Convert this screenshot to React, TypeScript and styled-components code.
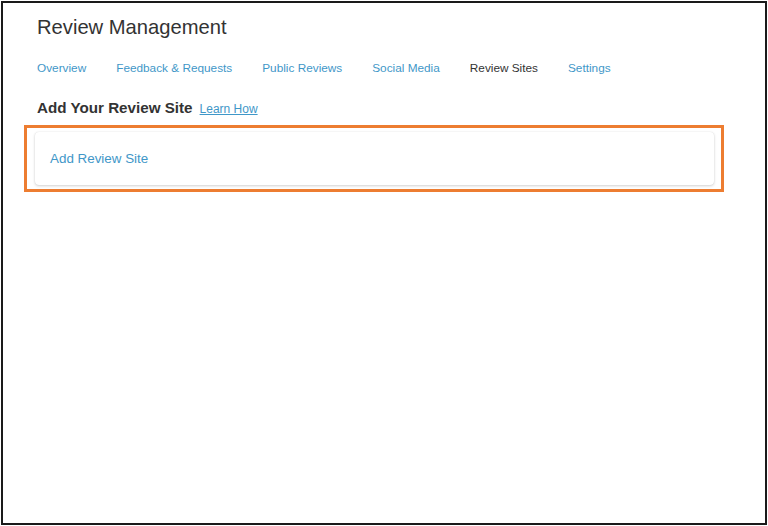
import styled, { createGlobalStyle } from 'styled-components';

const GlobalStyle = createGlobalStyle`
  html, body {
    margin: 0;
    padding: 0;
    background: #ffffff;
  }
  body {
    font-family: 'Liberation Sans', Arial, sans-serif;
    color: #333333;
  }
`;

const Frame = styled.div`
  box-sizing: border-box;
  margin: 1px;
  width: 766px;
  height: 524px;
  border: 2px solid #1a1a1a;
  padding: 0 41px 0 21px;
`;

const Header = styled.div`
  padding-left: 13px;
`;

const Title = styled.h1`
  margin: 0;
  padding-top: 12px;
  font-size: 20.2px;
  line-height: 24px;
  font-weight: 400;
  color: #333333;
`;

const Tabs = styled.nav`
  display: flex;
  gap: 30px;
  margin-top: 21px;
`;

const Tab = styled.a<{ $active?: boolean }>`
  font-size: 11.8px;
  line-height: 16px;
  color: ${(p) => (p.$active ? '#333333' : '#3f97c8')};
  text-decoration: none;
  cursor: pointer;
`;

const SectionTitle = styled.div`
  display: flex;
  align-items: baseline;
  gap: 7px;
  margin-top: 23px;
`;

const Heading = styled.h2`
  margin: 0;
  font-size: 15.2px;
  line-height: 18px;
  font-weight: 700;
  color: #333333;
`;

const LearnLink = styled.a`
  font-size: 12px;
  color: #3f97c8;
  text-decoration: underline;
  cursor: pointer;
`;

const Highlight = styled.div`
  margin-top: 8px;
  border: 3px solid #ed7d31;
  padding: 4px 7px 4px 8px;
`;

const Card = styled.div`
  height: 53px;
  display: flex;
  align-items: center;
  padding: 0 15px;
  background: #ffffff;
  border-radius: 4px;
  box-shadow: 0 1px 3px rgba(0, 0, 0, 0.18), 0 0 1px rgba(0, 0, 0, 0.12);
`;

const CardLink = styled.a`
  font-size: 13.4px;
  color: #3f97c8;
  text-decoration: none;
  cursor: pointer;
`;

const tabs = ['Overview', 'Feedback & Requests', 'Public Reviews', 'Social Media', 'Review Sites', 'Settings'];

export default function App() {
  return (
    <>
      <GlobalStyle />
      <Frame>
        <Header>
          <Title>Review Management</Title>
          <Tabs>
            {tabs.map((t) => (
              <Tab key={t} $active={t === 'Review Sites'}>
                {t}
              </Tab>
            ))}
          </Tabs>
          <SectionTitle>
            <Heading>Add Your Review Site</Heading>
            <LearnLink>Learn How</LearnLink>
          </SectionTitle>
        </Header>
        <Highlight>
          <Card>
            <CardLink>Add Review Site</CardLink>
          </Card>
        </Highlight>
      </Frame>
    </>
  );
}
